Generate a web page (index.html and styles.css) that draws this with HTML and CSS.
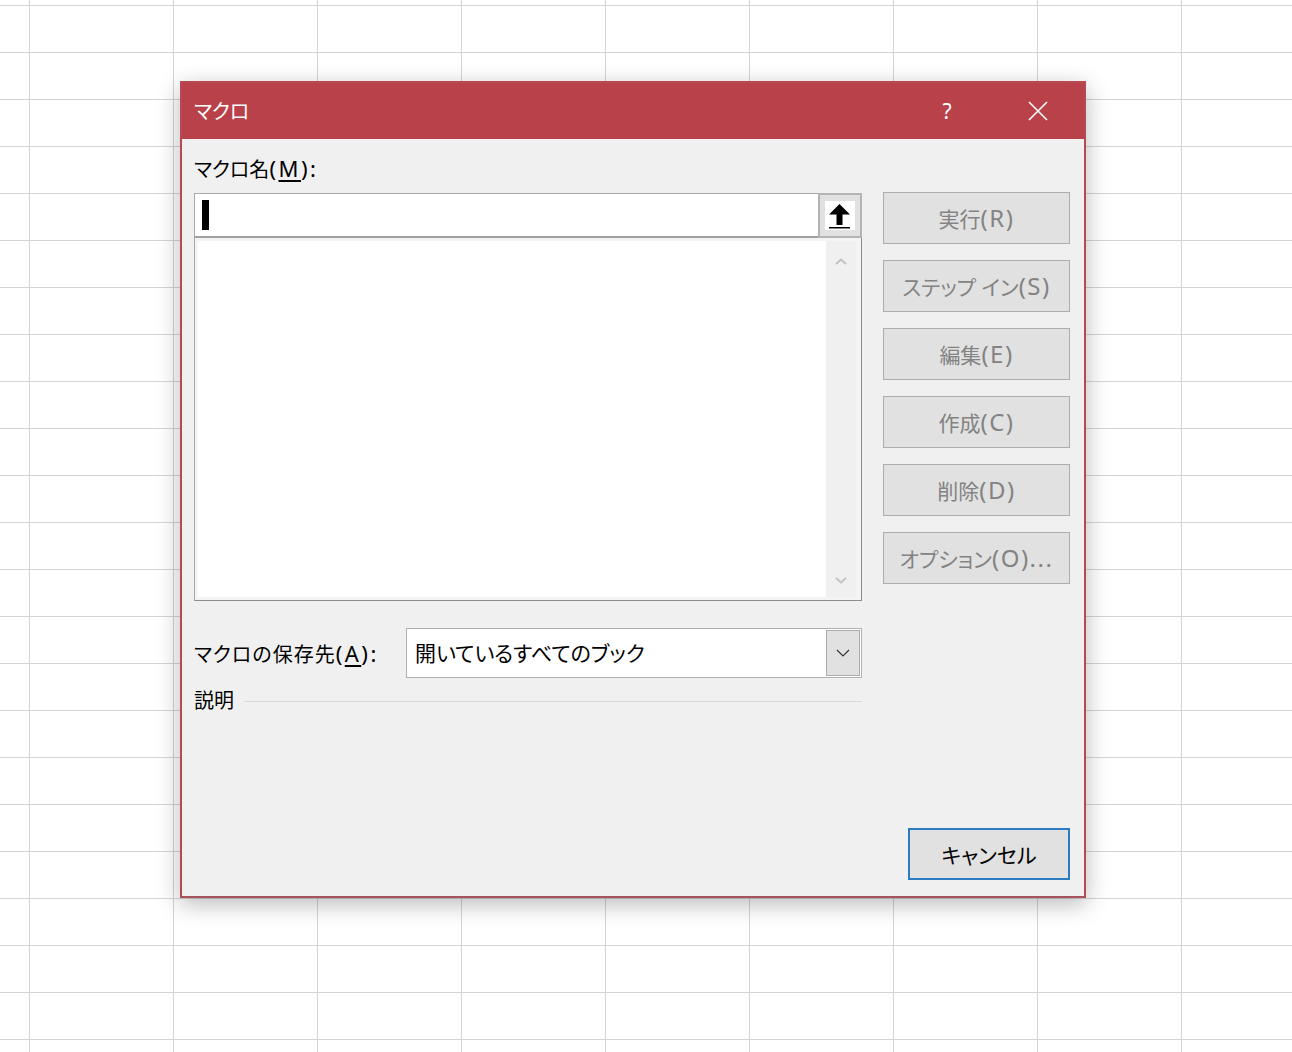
FILE: index.html
```html
<!DOCTYPE html>
<html lang="ja">
<head>
    <meta charset="UTF-8">
    <title>マクロ</title>
    <link rel="stylesheet" href="styles.css">
</head>
<body>
    <div class="sheet"></div>

    <div class="dialog">
        <div class="titlebar">
            <span class="title">マクロ</span>
            <span class="help">?</span>
            <span class="close">
                <svg width="22" height="22" viewBox="0 0 22 22"><path d="M2 2 L20 20 M20 2 L2 20" stroke="#fff" stroke-width="1.6" fill="none"/></svg>
            </span>
        </div>

        <div class="content">
            <div class="left">
                <label class="name-label">マクロ名<span class="lat">(<u>M</u>):</span></label>
                <div class="name-row">
                    <div class="name-input"><span class="caret"></span></div>
                    <div class="ref-btn">
                        <svg width="30" height="29" viewBox="0 0 30 29">
                            <rect width="30" height="29" fill="#fff"/>
                            <polygon points="14.5,3 4,13.5 11.5,13.5 11.5,24 17.5,24 17.5,13.5 25,13.5" fill="#000"/>
                            <rect x="4" y="26" width="21" height="1.5" fill="#000"/>
                        </svg>
                    </div>
                </div>
                <div class="listbox">
                    <div class="list-area"></div>
                    <div class="scrollbar">
                        <svg width="12" height="7" viewBox="0 0 12 7"><path d="M1 6 L6 1.5 L11 6" stroke="#c2c2c2" stroke-width="2" fill="none"/></svg>
                        <svg width="12" height="7" viewBox="0 0 12 7"><path d="M1 1 L6 5.5 L11 1" stroke="#c2c2c2" stroke-width="2" fill="none"/></svg>
                    </div>
                </div>

                <div class="store-row">
                    <label>マクロの保存先<span class="lat">(<u>A</u>):</span></label>
                    <div class="combo">
                        <span class="combo-text">開いているすべてのブック</span>
                        <span class="combo-btn">
                            <svg width="14" height="8" viewBox="0 0 14 8"><path d="M1 1 L7 7 L13 1" stroke="#333" stroke-width="1.2" fill="none"/></svg>
                        </span>
                    </div>
                </div>

                <div class="desc-row">
                    <span>説明</span>
                    <span class="rule"></span>
                </div>
            </div>

            <div class="right">
                <button class="disabled">実行<span class="lat">(R)</span></button>
                <button class="disabled">ステップ イン<span class="lat">(S)</span></button>
                <button class="disabled">編集<span class="lat">(E)</span></button>
                <button class="disabled">作成<span class="lat">(C)</span></button>
                <button class="disabled">削除<span class="lat">(D)</span></button>
                <button class="disabled">オプション<span class="lat">(O)...</span></button>
            </div>
        </div>

        <div class="footer">
            <button class="cancel">キャンセル</button>
        </div>
    </div>
</body>
</html>
```

FILE: styles.css
```css
* {
    margin: 0;
    padding: 0;
    box-sizing: border-box;
}

body {
    font-family: "Noto Sans", "Noto Sans CJK JP", sans-serif;
    font-feature-settings: "palt";
    width: 1292px;
    height: 1052px;
    overflow: hidden;
    background-color: #fff;
}

/* spreadsheet grid behind the dialog */
.sheet {
    width: 100%;
    height: 100%;
    background-image:
        linear-gradient(to right, #d4d4d4 1px, transparent 1px),
        linear-gradient(to bottom, #d4d4d4 1px, transparent 1px);
    background-size: 144px 47px;
    background-position: 29px 5px;
}

.dialog {
    position: absolute;
    left: 180px;
    top: 81px;
    width: 906px;
    height: 817px;
    background-color: #f0f0f0;
    border: 2px solid #b64a52;
    border-bottom-color: #a8525a;
    box-shadow: 0 6px 22px rgba(0, 0, 0, 0.28);
    display: flex;
    flex-direction: column;
}

.titlebar {
    height: 56px;
    background-color: #b9424a;
    color: #fff;
    display: flex;
    align-items: center;
    padding-left: 12px;
    font-size: 20px;
}

.title {
    flex: 1;
    padding-bottom: 2px;
}

.help {
    width: 30px;
    text-align: center;
    margin-right: 65px;
    font-size: 21px;
}

.close {
    width: 22px;
    height: 22px;
    margin-right: 35px;
    display: flex;
}

.content {
    display: flex;
    gap: 21px;
    padding: 0 14px 0 12px;
}

.left {
    width: 668px;
    display: flex;
    flex-direction: column;
}

/* latin parts of labels run wider than the kana */
.left .lat {
    font-size: 22px;
    letter-spacing: 2.5px;
    line-height: 1;
}

.name-label {
    font-size: 20px;
    line-height: 28px;
    padding-top: 17px;
    margin-bottom: 9px;
    color: #000;
}

u {
    text-underline-offset: 3px;
}

.name-row {
    display: flex;
    height: 45px;
}

.name-input {
    flex: 1;
    background-color: #fff;
    border: 1px solid #a8a8a8;
    border-bottom: 2px solid #a0a0a0;
    border-right: none;
    padding: 6px 0 0 7px;
}

.caret {
    display: block;
    width: 7px;
    height: 30px;
    background-color: #000;
}

.ref-btn {
    width: 44px;
    background-color: #e1e1e1;
    border: 2px solid #b4b4b4;
    display: flex;
    align-items: center;
    justify-content: center;
}

.listbox {
    height: 363px;
    border: 1px solid #a8a8a8;
    border-bottom-color: #8c8c8c;
    border-right-color: #8c8c8c;
    border-top: none;
    background-color: #f4f4f4;
    padding: 3px 0 3px 3px;
    display: flex;
}

.list-area {
    flex: 1;
    background-color: #fff;
}

.scrollbar {
    width: 30px;
    margin-right: 5px;
    background-color: #f0f0f0;
    display: flex;
    flex-direction: column;
    justify-content: space-between;
    align-items: center;
    padding: 17px 0 13px;
}

.store-row {
    display: flex;
    align-items: center;
    margin-top: 27px;
    height: 50px;
    font-size: 20px;
}

.store-row label {
    width: 212px;
    letter-spacing: 1px;
}

.combo {
    flex: 1;
    height: 50px;
    background-color: #fff;
    border: 1px solid #b0b0b0;
    display: flex;
    align-items: center;
    padding: 1px;
}

.combo-text {
    flex: 1;
    padding-left: 7px;
    padding-bottom: 2px;
    font-size: 21px;
}

.combo-btn {
    width: 34px;
    height: 100%;
    background-color: #e1e1e1;
    border: 1px solid #acacac;
    display: flex;
    align-items: center;
    justify-content: center;
}

.desc-row {
    display: flex;
    align-items: center;
    margin-top: 9px;
    line-height: 28px;
    font-size: 20px;
}

.rule {
    flex: 1;
    height: 1px;
    background-color: #d9d9d9;
    margin-left: 10px;
}

.right {
    width: 187px;
    padding-top: 53px;
    display: flex;
    flex-direction: column;
    gap: 16px;
}

button {
    font-family: inherit;
    font-feature-settings: "palt";
    font-size: 21px;
    height: 52px;
    background-color: #e1e1e1;
    border: 1px solid #adadad;
    outline: none;
}

button .lat {
    font-size: 24px;
    letter-spacing: 1.5px;
    line-height: 1;
}

.disabled {
    color: #838383;
}

.footer {
    margin-top: auto;
    display: flex;
    justify-content: flex-end;
    padding: 0 14px 16px 0;
}

.cancel {
    width: 162px;
    color: #000;
    border: 2px solid #2b7bc0;
}
```
